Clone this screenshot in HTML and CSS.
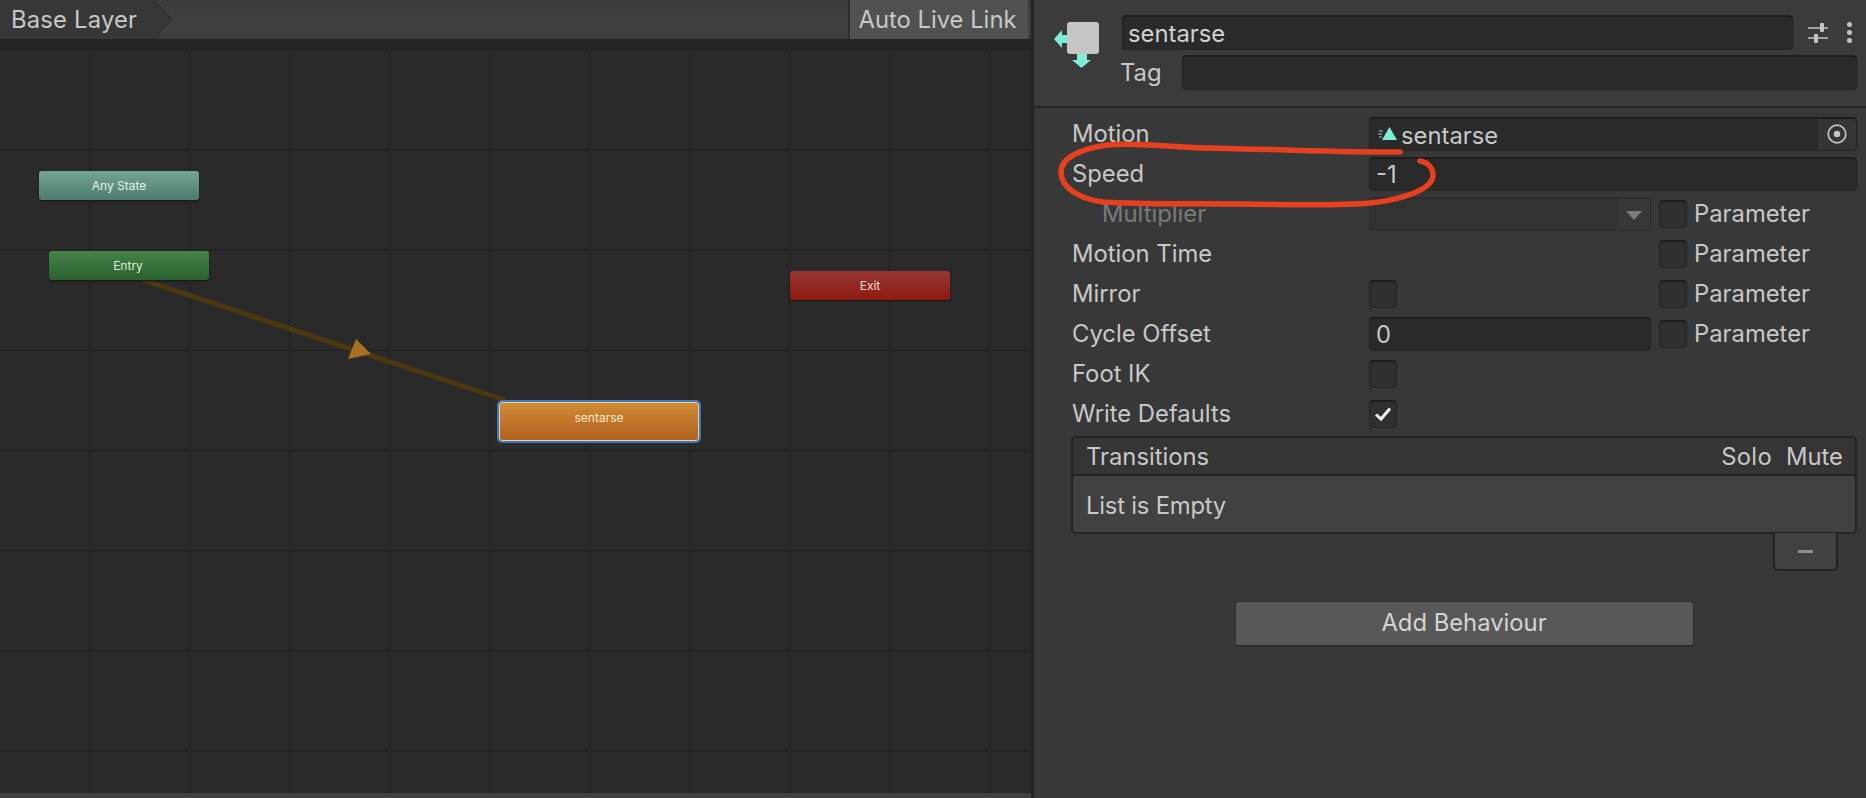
FILE: index.html
```html
<!DOCTYPE html>
<html lang="en">
<head>
  <meta charset="UTF-8">
  <title>Animator</title>
  <link rel="stylesheet" href="styles.css">
</head>
<body>
<div id="app">
  <div id="animator">
    <div class="topbar">
      <div class="crumb">Base Layer
        <svg class="crumb-tip" width="20" height="39" viewBox="0 0 20 39"><path d="M0 0 L19 19.5 L0 39 Z" fill="#373737"/><path d="M0 0 L19 19.5 L0 39" fill="none" stroke="#2a2a2a" stroke-width="1"/></svg>
      </div>
      <div class="live-link">Auto Live Link</div>
    </div>
    <div class="graph">
      <svg class="wires" width="1031" height="754" viewBox="0 0 1031 754">
        <line x1="143" y1="241" x2="505" y2="361" stroke="#4e3810" stroke-width="5"/>
        <polygon points="356,300 371,315 348,320" fill="#a8701f"/>
      </svg>
      <div class="node any-state">Any State</div>
      <div class="node entry">Entry</div>
      <div class="node exit">Exit</div>
      <div class="node state">sentarse</div>
    </div>
    <div class="bottom-strip"></div>
  </div>

  <div id="inspector">
    <div class="head">
      <div class="head-line">
        <div class="state-icon">
          <svg width="50" height="50" viewBox="0 0 50 50">
            <path d="M0 17 L8 8 L8 13 L14 13 L14 21 L8 21 L8 26 Z" fill="#7fecd5"/>
            <path d="M23 31 L33 31 L33 38 L37 38 L27.5 46 L18 38 L23 38 Z" fill="#7fecd5"/>
            <rect x="13" y="0" width="32" height="32" rx="3" fill="#c6c6c6"/>
          </svg>
        </div>
        <div class="field name-field">sentarse</div>
        <svg class="sliders" width="20" height="20" viewBox="0 0 20 20">
          <path d="M0 5 H20 M0 15 H20" stroke="#c4c4c4" stroke-width="1.6"/>
          <rect x="12" y="0" width="4" height="9" rx="1" fill="#c4c4c4"/>
          <rect x="6" y="11" width="4" height="9" rx="1" fill="#c4c4c4"/>
        </svg>
        <div class="dots"><i></i><i></i><i></i></div>
      </div>
      <div class="head-line tag-line">
        <span class="tag-label">Tag</span>
        <div class="field tag-field"></div>
      </div>
    </div>

    <div class="props">
      <div class="row">
        <span>Motion</span>
        <div class="field wide motion-field">
          <svg width="20" height="16" viewBox="0 0 20 16">
            <path d="M1 5 H5 M0 8 H4 M1 11 H4" stroke="#bdbdbd" stroke-width="1"/>
            <path d="M11.5 1 L19 14 L4 14 Z" fill="#7fecd5"/>
          </svg>
          <span>sentarse</span>
          <div class="picker"><svg width="20" height="20" viewBox="0 0 20 20"><circle cx="10" cy="10" r="8.8" fill="none" stroke="#c4c4c4" stroke-width="1.7"/><circle cx="10" cy="10" r="3.2" fill="#c4c4c4"/></svg></div>
        </div>
      </div>
      <div class="row">
        <span>Speed</span>
        <div class="field wide">-1</div>
      </div>
      <div class="row">
        <span class="sub">Multiplier</span>
        <div class="field disabled"><b class="drop"></b></div>
        <div class="param"><i class="check"></i><span>Parameter</span></div>
      </div>
      <div class="row">
        <span>Motion Time</span>
        <div></div>
        <div class="param"><i class="check"></i><span>Parameter</span></div>
      </div>
      <div class="row">
        <span>Mirror</span>
        <div><i class="check"></i></div>
        <div class="param"><i class="check"></i><span>Parameter</span></div>
      </div>
      <div class="row">
        <span>Cycle Offset</span>
        <div class="field">0</div>
        <div class="param"><i class="check"></i><span>Parameter</span></div>
      </div>
      <div class="row">
        <span>Foot IK</span>
        <div><i class="check"></i></div>
      </div>
      <div class="row">
        <span>Write Defaults</span>
        <div><i class="check on"><svg width="18" height="16" viewBox="0 0 18 16"><path d="M2 8.5 L7 13 L16 2.5" fill="none" stroke="#f0f0f0" stroke-width="3"/></svg></i></div>
      </div>
    </div>

    <div class="list">
      <div class="list-head"><span>Transitions</span><span class="solo-mute"><span>Solo</span><span>Mute</span></span></div>
      <div class="list-body">List is Empty</div>
    </div>
    <div class="list-foot"><b></b></div>

    <div class="add-row"><div class="add-btn">Add Behaviour</div></div>
  </div>

  <svg class="scribble" width="1866" height="798" viewBox="0 0 1866 798">
    <path d="M1400 152 C1340 152 1300 150 1203 148 C1170 147 1130 142 1107 145 C1080 149 1061 158 1061 172 C1061 190 1085 200 1103 202 C1150 205 1190 203 1237 204 C1290 205 1340 206 1370 203 C1400 200 1433 190 1433 175 C1433 167 1427 162 1420 161" fill="none" stroke="#e6401f" stroke-width="5.5" stroke-linecap="round"/>
  </svg>
</div>
</body>
</html>
```

FILE: styles.css
```css
html, body {margin:0;height:100%;overflow:hidden;background:#383838;}

#app {
  position:relative;
  display:flex;
  width:1866px;height:798px;
  font-family:'Inter', 'Noto Sans', sans-serif;
  font-size:23.8px;
  color:#c8c8c8;
}

/* left: animator window */
#animator {
  width:1031px;
  display:flex;flex-direction:column;
  border-right:3px solid #232323;
}

.topbar {
  height:39px;
  display:flex;justify-content:space-between;
  background:linear-gradient(#3c3c3c, #414141 85%, #383838);
}

.crumb {
  position:relative;
  width:153px;
  padding-left:11px;box-sizing:border-box;
  line-height:39px;
  letter-spacing:.2px;
  background:#373737;
}
.crumb-tip {position:absolute;left:153px;top:0;}

.live-link {
  width:180px;margin-right:3px;padding-right:3px;
  border-left:2px solid #2e2e2e;
  box-sizing:border-box;
  background:#515151;
  line-height:39px;
  text-align:center;
  white-space:nowrap;
}

.graph {
  position:relative;
  flex:1;
  background-color:#2a2a2a;
  background-image:
    linear-gradient(#242424 0 11px, transparent 11px),
    linear-gradient(90deg, #212121 0 1px, #262626 1px 2px, transparent 2px),
    linear-gradient(#212121 0 1px, #262626 1px 2px, transparent 2px);
  background-size:100% 100%, 100px 100px, 100px 100.2px;
  background-position:0 0, 89px 0, 0 10px;
  background-repeat:no-repeat, repeat, repeat;
  overflow:hidden;
}

.bottom-strip {height:5px;background:#404040;}

.wires {position:absolute;left:0;top:0;}

.node {
  position:absolute;
  width:160px;height:29px;
  border-radius:3px;
  font-size:12px;
  line-height:29px;
  text-align:center;
  box-shadow:0 1px 2px #151515;
}
.any-state {left:39px;top:132px;background:linear-gradient(#74a596, #4d7a70);color:#e4eeea;}
.entry {left:49px;top:212px;background:linear-gradient(#458348, #2a6230);color:#dcebdc;padding-right:2px;box-sizing:border-box;}
.exit {left:790px;top:232px;background:linear-gradient(#963533, #8e1a10);color:#f4dcd8;}
.state {
  left:499px;top:363px;
  width:200px;height:39px;
  box-sizing:border-box;
  border:1px solid #e6d5b5;
  box-shadow:0 0 0 2px #3f78b8;
  background:linear-gradient(#d28a34, #b0611f);
  color:#f8e8d0;
  line-height:30px;
}

/* right: inspector */
#inspector {flex:1;min-width:0;}

.head {
  height:108px;box-sizing:border-box;
  padding-top:15px;
  background:#3b3b3b;
  border-bottom:2px solid #232323;
}
.head-line {display:flex;align-items:center;height:35px;position:relative;}
.tag-line {margin-top:5px;padding-left:86px;}

.state-icon {width:88px;height:35px;position:relative;}
.state-icon svg {position:absolute;left:20px;top:7px;}

.tag-label {width:62px;}

.field {
  height:34px;box-sizing:border-box;
  background:#2a2a2a;
  border:1px solid #242424;
  border-top:2px solid #1d1d1d;
  border-radius:4px;
  padding-left:6px;
  line-height:31px;
  display:flex;align-items:center;
}
.name-field {width:671px;height:35px;color:#d2d2d2;padding-left:5px;}
.tag-field {width:675px;height:35px;}
.sliders {margin-left:15px;}
.dots {margin-left:19px;display:flex;flex-direction:column;gap:3px;}
.dots i {display:block;width:5px;height:5px;border-radius:50%;background:#c4c4c4;}

.props {padding:5px 0 0 38px;}

.row {
  display:grid;
  grid-template-columns:297px 282px 1fr;
  height:40px;
  align-items:center;
}
.row > span {line-height:40px;padding-top:1px;}
.row .sub {padding-left:30px;color:#7a7a7a;}

.wide {grid-column:2 / 4;margin-right:9px;}
.motion-field {padding-left:8px;position:relative;gap:3px;}
.motion-field > span {line-height:31px;padding-top:2px;}
.picker {
  position:absolute;right:0;top:0;bottom:0;
  width:38px;
  background:#353535;
  border-radius:0 4px 4px 0;
  display:flex;align-items:center;justify-content:center;
}

.disabled {background:#323232;border-color:#2d2d2d;position:relative;overflow:hidden;}
.disabled::after {content:"";position:absolute;right:0;top:0;bottom:0;width:32px;background:#373737;}
.drop {
  position:absolute;right:8px;top:12px;z-index:1;
  border:8px solid transparent;border-top:9px solid #7c7c7c;border-bottom:0;
}

.param {display:flex;align-items:center;gap:7px;padding-left:8px;}

.check {
  display:block;
  width:28px;height:28px;box-sizing:border-box;
  background:#2f2f2f;
  border:1px solid #232323;
  border-top:2px solid #1e1e1e;
  border-radius:4px;
}
.check.on {display:flex;align-items:center;justify-content:center;}

.list {
  margin:3px 9px 0 37px;
  border:2px solid #232323;
  border-radius:5px;
  overflow:hidden;
}
.list-head {
  height:36px;
  background:#353535;
  border-bottom:2px solid #232323;
  display:flex;justify-content:space-between;align-items:center;
  padding:0 12px 0 13px;
}
.solo-mute {display:flex;gap:14px;}
.solo-mute span:first-child {letter-spacing:.3px;}
.list-body {
  height:56px;
  background:#414141;
  padding-left:13px;
  line-height:59px;
  letter-spacing:-.2px;
}

.list-foot {
  width:65px;height:38px;box-sizing:border-box;
  margin:-1px 28px 0 auto;
  background:#414141;
  border:2px solid #232323;border-top:0;
  border-radius:0 0 5px 5px;
  display:flex;align-items:center;justify-content:center;
}
.list-foot b {width:15px;height:3px;background:#8e8e8e;}

.add-row {display:flex;justify-content:center;margin:30px 9px 0 37px;}
.add-btn {
  width:459px;height:46px;box-sizing:border-box;
  background:#585858;
  border:1px solid #2e2e2e;border-bottom:2px solid #2a2a2a;
  border-radius:4px;
  text-align:center;
  line-height:42px;
  color:#d4d4d4;
}

.scribble {position:absolute;left:0;top:0;pointer-events:none;}
```
